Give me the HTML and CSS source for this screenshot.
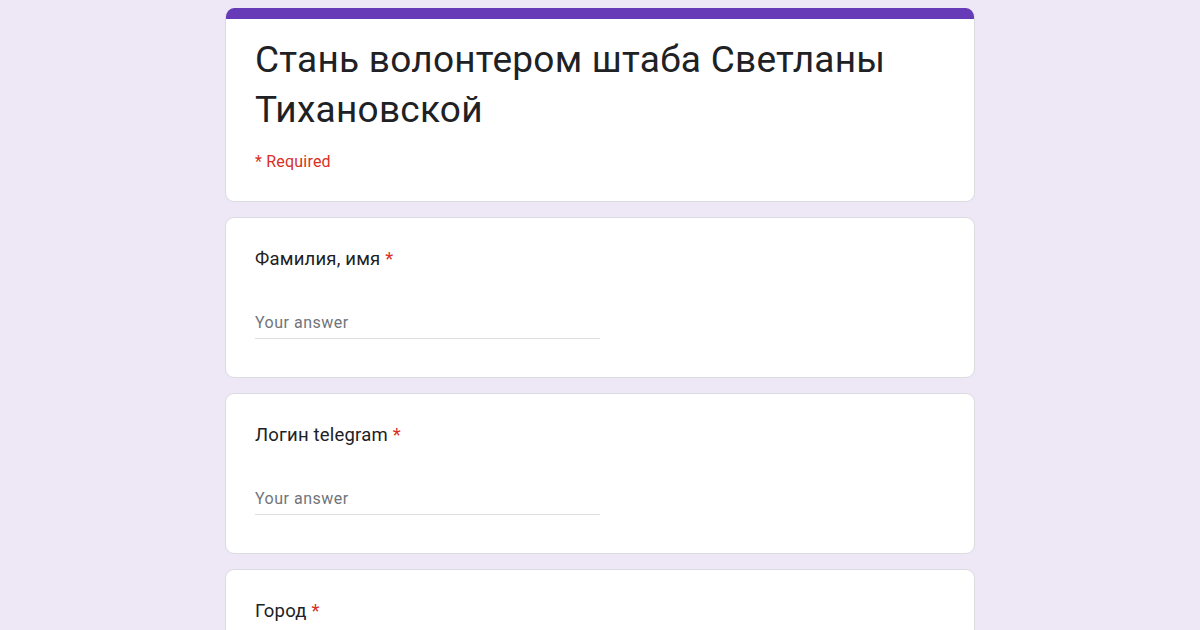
FILE: index.html
```html
<!DOCTYPE html>
<html lang="ru">
<head>
<meta charset="utf-8">
<link rel="stylesheet" href="styles.css">
</head>
<body>
<div class="form">
  <div class="card header">
    <div class="bar"></div>
    <div class="header-body">
      <h1 class="title">Стань волонтером штаба Светланы Тихановской</h1>
      <div class="required">* Required</div>
    </div>
  </div>
  <div class="card question">
    <div class="label">Фамилия, имя <span class="star">*</span></div>
    <div class="input">Your answer</div>
  </div>
  <div class="card question">
    <div class="label">Логин telegram <span class="star">*</span></div>
    <div class="input">Your answer</div>
  </div>
  <div class="card question">
    <div class="label">Город <span class="star">*</span></div>
    <div class="input">Your answer</div>
  </div>
</div>
</body>
</html>
```
FILE: styles.css
```css
html, body {
  margin: 0;
  padding: 0;
  background: #ede7f6;
  font-family: Roboto, "Liberation Sans", sans-serif;
  overflow: hidden;
  height: 630px;
}
.form {
  width: 750px;
  margin: 8px auto 0;
  display: flex;
  flex-direction: column;
  gap: 15px;
}
.card {
  background: #fff;
  border: 1px solid #dadce0;
  border-radius: 9px;
  box-sizing: border-box;
}
.header {
  border-top: none;
  overflow: hidden;
}
.bar {
  height: 11px;
  background: #673ab7;
}
.header-body {
  padding: 16px 30px 29px 29px;
}
.title {
  margin: 0;
  font-weight: 400;
  font-size: 37px;
  line-height: 50px;
  letter-spacing: 0.25px;
  color: #202124;
}
.required {
  margin-top: 17px;
  font-size: 16px;
  line-height: 20px;
  letter-spacing: 0.2px;
  color: #d93025;
}
.question {
  padding: 29px 29px 38px;
}
.label {
  font-size: 18.5px;
  line-height: 24px;
  letter-spacing: 0.2px;
  color: #202124;
}
.star {
  color: #d93025;
}
.input {
  margin-top: 39px;
  width: 345px;
  height: 29px;
  box-sizing: border-box;
  border-bottom: 1px solid #e0e0e0;
  font-size: 16px;
  line-height: 26px;
  color: #70757a;
  letter-spacing: 0.5px;
}
```
